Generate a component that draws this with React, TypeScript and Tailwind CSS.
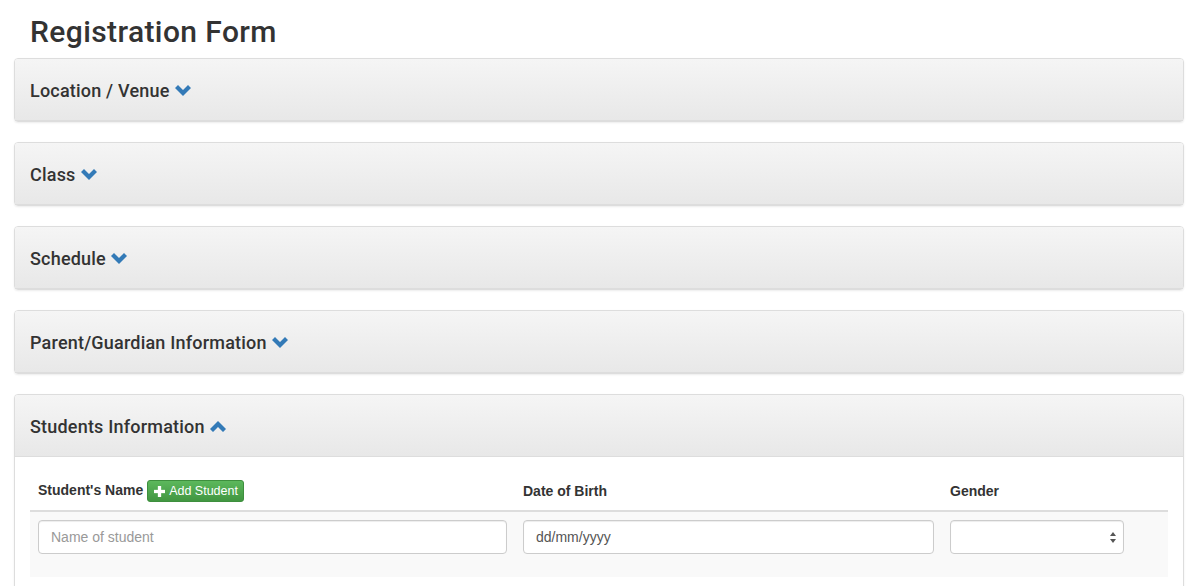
import { useState } from "react";

const sections = [
  "Location / Venue",
  "Class",
  "Schedule",
  "Parent/Guardian Information",
];

const Chevron = ({ up = false }: { up?: boolean }) => (
  <svg
    viewBox="0 0 16 11"
    className={`ml-[5px] inline-block h-[11px] w-[16px] ${up ? "rotate-180" : ""}`}
    fill="#337ab7"
  >
    <polygon points="0,3 3,0 8,5 13,0 16,3 8,11" />
  </svg>
);

const PanelHeading = ({ title, up }: { title: string; up?: boolean }) => (
  <div className="flex h-[62px] items-center border-b border-[#ddd] bg-gradient-to-b from-[#f5f5f5] to-[#e8e8e8] px-[15px] pt-[1px] rounded-t-[3px]">
    <h3 className="flex items-center font-['Roboto',sans-serif] text-[18px] tracking-[0.2px] font-medium text-[#333]">
      {title}
      <Chevron up={up} />
    </h3>
  </div>
);

const App = () => {
  const [name, setName] = useState("");
  const [dob, setDob] = useState("");

  return (
    <div className="min-h-[586px] bg-white pl-[14px] pr-[6px] font-['Liberation_Sans',Arial,sans-serif] text-[14px] text-[#333]">
      <h1 className="pl-[16px] pt-[15px] mb-[10px] font-['Roboto',sans-serif] text-[30px] leading-[33px] tracking-[0.4px] font-medium text-[#333]">
        Registration Form
      </h1>

      {sections.map((s) => (
        <div
          key={s}
          className="mb-[20px] w-[1170px] rounded-[4px] border border-[#ddd] shadow-[0_1px_2px_rgba(0,0,0,0.08)]"
        >
          <PanelHeading title={s} />
        </div>
      ))}

      {/* students panel - open */}
      <div className="w-[1170px] rounded-[4px] border border-[#ddd] bg-white shadow-[0_1px_2px_rgba(0,0,0,0.08)]">
        <PanelHeading title="Students Information" up />
        <div className="p-[15px]">
          <table className="w-[1138px] table-fixed border-collapse">
            <thead>
              <tr>
                <th className="w-[485px] border-b-2 border-[#ddd] p-[8px] text-left align-bottom text-[14px] leading-[20px] font-bold">
                  Student's Name{" "}
                  <button className="inline-flex h-[22px] items-center rounded-[3px] border border-[#3e8f3e] bg-gradient-to-b from-[#5cb85c] to-[#419641] pl-[6px] pr-[5px] align-middle text-[12.5px] font-normal text-white">
                    <svg viewBox="0 0 10 10" className="mr-[4px] h-[11px] w-[11px]" fill="white">
                      <rect x="3.5" y="0" width="3" height="10" />
                      <rect x="0" y="3.5" width="10" height="3" />
                    </svg>
                    Add Student
                  </button>
                </th>
                <th className="w-[427px] border-b-2 border-[#ddd] p-[8px] text-left align-bottom text-[14px] leading-[20px] font-bold">
                  <span className="relative top-[-1px]">Date of Birth</span>
                </th>
                <th className="w-[226px] border-b-2 border-[#ddd] p-[8px] text-left align-bottom text-[14px] leading-[20px] font-bold">
                  <span className="relative top-[-1px]">Gender</span>
                </th>
              </tr>
            </thead>
            <tbody>
              <tr className="bg-[#f9f9f9]">
                <td className="p-[8px] align-top">
                  <div className="mb-[15px]">
                    <input
                      value={name}
                      onChange={(e) => setName(e.target.value)}
                      placeholder="Name of student"
                      className="h-[34px] w-full rounded-[4px] border border-[#ccc] bg-white px-[12px] text-[14px] text-[#555] shadow-[inset_0_1px_1px_rgba(0,0,0,0.075)] outline-none placeholder:text-[#999]"
                    />
                  </div>
                </td>
                <td className="p-[8px] align-top">
                  <div className="mb-[15px]">
                    <input
                      value={dob}
                      onChange={(e) => setDob(e.target.value)}
                      placeholder="dd/mm/yyyy"
                      className="h-[34px] w-full rounded-[4px] border border-[#ccc] bg-white px-[12px] text-[14px] text-[#555] shadow-[inset_0_1px_1px_rgba(0,0,0,0.075)] outline-none placeholder:text-[#555]"
                    />
                  </div>
                </td>
                <td className="p-[8px] align-top">
                  <div className="mb-[15px]">
                    <div className="flex h-[34px] w-[174px] items-center justify-end rounded-[4px] border border-[#ccc] bg-white pr-[7px] shadow-[inset_0_1px_1px_rgba(0,0,0,0.075)]">
                      <svg viewBox="0 0 6 11" className="h-[11px] w-[6px]" fill="#555">
                        <polygon points="3,0 6,4 0,4" />
                        <polygon points="0,7 6,7 3,11" />
                      </svg>
                    </div>
                  </div>
                </td>
              </tr>
            </tbody>
          </table>
        </div>
      </div>
    </div>
  );
};

export default App;
